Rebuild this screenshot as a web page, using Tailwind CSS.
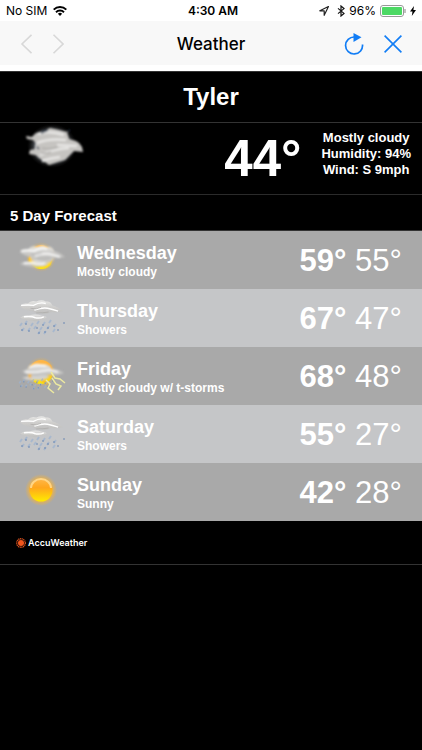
<!DOCTYPE html>
<html lang="en">
<head>
    <meta charset="UTF-8">
    <meta name="viewport" content="width=device-width, initial-scale=1.0">
    <title>Weather</title>
    <script src="https://cdn.jsdelivr.net/npm/@tailwindcss/browser@4"></script>
</head>
<body class="min-h-screen bg-black font-['Liberation_Sans',Arial,sans-serif] text-white">
    <!-- Shared icon artwork -->
    <svg class="absolute h-0 w-0" aria-hidden="true">
        <defs>
            <linearGradient id="cloud-fill" x1="0" y1="0" x2="0" y2="1">
                <stop offset="0" stop-color="#ececea"/>
                <stop offset=".5" stop-color="#cfcecc"/>
                <stop offset="1" stop-color="#bebebc"/>
            </linearGradient>
            <linearGradient id="sun-fill" x1="0" y1="0" x2="0" y2="1">
                <stop offset="0" stop-color="#ffb84a"/>
                <stop offset=".4" stop-color="#ffa61c"/>
                <stop offset="1" stop-color="#ffec00"/>
            </linearGradient>
            <radialGradient id="sun-glow">
                <stop offset=".6" stop-color="#ffb52e" stop-opacity=".9"/>
                <stop offset="1" stop-color="#ffb52e" stop-opacity="0"/>
            </radialGradient>
            <radialGradient id="moon-glow">
                <stop offset=".6" stop-color="#b4bcc6" stop-opacity=".9"/>
                <stop offset=".75" stop-color="#5c6066" stop-opacity=".6"/>
                <stop offset="1" stop-color="#222222" stop-opacity="0"/>
            </radialGradient>
            <filter id="soft" x="-20%" y="-20%" width="140%" height="140%">
                <feGaussianBlur stdDeviation=".8"/>
            </filter>
        </defs>
        <symbol id="clouds" viewBox="0 0 50 40">
            <g filter="url(#soft)">
                <path d="M3 13q3-4 8-3q4-4 9-2q6-3 10 0q5-1 7 4q7 2 11 6q-6 2-12 1q-6 3-12 1q-5 1-8-2q-8 0-13-5z" fill="url(#cloud-fill)" opacity=".9"/>
                <path d="M3 25q4-3 9-2q7-3 14 0q4 0 5 2q-3 3-7 2q-4 3-9 1q-6 0-12-3z" fill="url(#cloud-fill)" opacity=".85"/>
                <path d="M4 12q8-1 13 0q7-4 13-2M18 17q8-3 14-2q5 1 11 3M7 24q8-1 12 1q5 1 9-1" fill="none" stroke="#fff" stroke-width="1.500"/>
                <path d="M14 15q6 2 11-1M20 20q7 0 13-1" fill="none" stroke="#aaa9a8" stroke-width="1" opacity=".7"/>
            </g>
        </symbol>
        <symbol id="rain" viewBox="0 0 50 16">
            <path d="M5 4l-2 3M10 2l-2 3M16 4l-2 3M22 2l-2 3M28 3l-2 3M34 1l-2 3M39 5l-2 3M7 9l-2 3M13 9l-2 3M19 7l-2 3M25 8l-2 3M32 7l-2 3M38 10l-2 3M23 12l-2 3M29 12l-2 3" stroke="#9db3d0" stroke-width="2" opacity=".7"/>
            <path d="M9 4v2M5 10v2M12 11v2M20 8v2M26 5v2M31 8v2M37 6v2M22 13v2M28 12v2M47 3v2M41 10v2" stroke="#6c88b2" stroke-width="1"/>
        </symbol>
        <symbol id="mostly-cloudy" viewBox="0 0 50 50">
            <circle cx="24" cy="22" r="15" fill="url(#sun-glow)" opacity=".6"/>
            <circle cx="24" cy="22" r="12" fill="url(#sun-fill)"/>
            <g filter="url(#soft)">
                <path d="M11 15q12-4 25 0l1 9q-4 6-14 6l-9-4z" fill="#c9c8c5"/>
                <path d="M13 22v4l3 1" fill="none" stroke="#ffcb2b" stroke-width="2.500"/>
                <path d="M22 31q7 2 11-3" fill="none" stroke="#ffdc20" stroke-width="3"/>
            </g>
            <use href="#clouds" y="4" width="50" height="40"/>
        </symbol>
        <symbol id="showers" viewBox="0 0 50 50">
            <use href="#clouds" y="1" width="48" height="38"/>
            <use href="#rain" y="26" width="50" height="16"/>
        </symbol>
        <symbol id="storms" viewBox="0 0 50 50">
            <circle cx="24" cy="21" r="15" fill="url(#sun-glow)" opacity=".6"/>
            <circle cx="24" cy="21" r="12" fill="url(#sun-fill)"/>
            <g filter="url(#soft)">
                <path d="M5 20q5-1 7-4q5-5 12-3q9 0 11 5q8 1 12 4q-7 3-15 2q-5 3-11 1q-8 2-16-5z" fill="url(#cloud-fill)"/>
                <path d="M5 27q8-3 15-2q8-2 13 1q-8 4-14 3q-8 1-14-2z" fill="#d2d2d0"/>
                <path d="M12 16q8-3 17-1M8 21q10 1 18-1q8-2 15 1" fill="none" stroke="#fafafa" stroke-width="1.500"/>
                <path d="M13 23v4M25 29l6 4" stroke="#f6b52b" stroke-width="2.500"/>
            </g>
            <use href="#rain" y="26" width="38" height="14"/>
            <path d="M34 21l4 6l5 1l5 4M29 29l4 4l-2 4l6 5M35 27l4 6l5 2l-3 4" fill="none" stroke="#ece9a0" stroke-width="1.500"/>
        </symbol>
        <symbol id="sunny" viewBox="0 0 50 50">
            <circle cx="24" cy="23" r="16" fill="url(#sun-glow)"/>
            <circle cx="24" cy="23" r="11.500" fill="url(#sun-fill)"/>
            <path d="M14 21a10 9 0 0 1 20 0" fill="none" stroke="#ffdf9a" stroke-width="2" opacity=".8"/>
        </symbol>
    </svg>

    <!-- Status bar -->
    <div class="grid h-[21px] grid-cols-[1fr_auto_1fr] items-center bg-white px-[6px] font-[Inter,sans-serif] text-[12px] leading-none text-black">
        <div class="flex items-center gap-[6px]">
            <span>No SIM</span>
            <svg class="h-[10px] w-[14px]" viewBox="0 0 14 10" fill="none" stroke="#000" stroke-width="2" aria-hidden="true">
                <path d="M.7 3.6a9 9 0 0 1 12.6 0M3 6.2a5.8 5.8 0 0 1 8 0"/>
                <path d="M7 10L4.9 7.8a3 3 0 0 1 4.2 0z" fill="#000" stroke="none"/>
            </svg>
        </div>
        <div class="pl-1 font-semibold">4:30 AM</div>
        <div class="flex items-center justify-end gap-1">
            <svg class="h-[10px] w-[10px]" viewBox="0 0 10 10" fill="none" stroke="#222" aria-hidden="true">
                <path d="M9.500 .5L.8 4.800h4.400V9.300z" stroke-width="1.200" stroke-linejoin="round"/>
            </svg>
            <svg class="ml-1 h-3 w-2" viewBox="0 0 8 12" fill="none" stroke="#111" stroke-width="1.200" aria-hidden="true">
                <path d="M1 3.400l6 5L4 11V1l3 2.600l-6 5"/>
            </svg>
            <span>96%</span>
            <svg class="h-3 w-[26px]" viewBox="0 0 26 12" aria-hidden="true">
                <rect x=".5" y=".5" width="23" height="11" rx="2.500" fill="#fff" stroke="#999"/>
                <rect x="2" y="2" width="20" height="8" rx="1" fill="#4cd964"/>
                <path d="M25 4v4" stroke="#999" stroke-width="1.200"/>
            </svg>
            <svg class="h-[10px] w-[6px]" viewBox="0 0 6 10" aria-hidden="true">
                <path d="M4 0L0 5.600h2.500L1.800 10L6 4H3.400z"/>
            </svg>
        </div>
    </div>

    <!-- Navigation bar -->
    <header class="grid h-[44px] grid-cols-[1fr_auto_1fr] items-center bg-[#f8f8f8] px-5 pt-[2px] text-black">
        <div class="flex gap-5">
            <button type="button" aria-label="Back" disabled>
                <svg class="h-5 w-3" viewBox="0 0 12 20" fill="none" stroke="#d8d8d8" stroke-width="1.600"><path d="M11.500 .8L2 10l9.500 9.200"/></svg>
            </button>
            <button type="button" aria-label="Forward" disabled>
                <svg class="h-5 w-3" viewBox="0 0 12 20" fill="none" stroke="#d8d8d8" stroke-width="1.600"><path d="M1.500 .8L11 10l-9.500 9.200"/></svg>
            </button>
        </div>
        <h1 class="pt-[2px] font-[Inter,sans-serif] text-[17px] font-medium">Weather</h1>
        <div class="flex items-center justify-end gap-5">
            <button type="button" aria-label="Reload">
                <svg class="h-[22px] w-[20px]" viewBox="0 0 20 22" fill="none" stroke="#117df5" stroke-width="1.700">
                    <path d="M10.500 4A8.500 8.500 0 1 0 18.500 11.500"/>
                    <path d="M9.500 0v9L17.500 4.200z" fill="#117df5" stroke="none"/>
                </svg>
            </button>
            <button type="button" aria-label="Close">
                <svg class="h-[18px] w-[18px]" viewBox="0 0 18 18" stroke="#117df5" stroke-width="1.600"><path d="M.6 .6l16.800 16.800M17.400 .6L.6 17.400"/></svg>
            </button>
        </div>
    </header>
    <div class="h-[6px] bg-white"></div>

    <main>
        <h2 class="flex h-[52px] items-center justify-center border-y border-[#333] text-[24px] leading-none font-bold">Tyler</h2>

        <!-- Current conditions -->
        <section class="flex h-[72px] items-start border-b border-[#2b2b2b] pl-5">
            <svg class="h-[48px] w-[66px]" viewBox="0 0 66 48" role="img" aria-label="Mostly cloudy">
                <ellipse cx="32" cy="23" rx="25" ry="22" fill="url(#moon-glow)"/>
                <g filter="url(#soft)">
                    <path d="M6 13l6 1l4-4l7-1l7-4l9 2l8 2l2 7l7 2l3 2l3 4l1 5l-9-1l-4 4l-5 5l-7 2l-9 3l-5-4l-5-3l-3-3l-7-1l1-4l5-1l1-6l-3-3l-6-1z" fill="#c6c4c1"/>
                    <path d="M18 11q10-4 26 1M17 20q12-5 29-3M37 22l20 1M20 32q13-6 29-7M22 38q9-3 18-4" fill="none" stroke="#e6e5e3" stroke-width="2.500"/>
                    <path d="M22 25q8 2 16-1M21 30q5 1 10-1" fill="none" stroke="#b0aeab" stroke-width="1.500"/>
                    <path d="M21 10l7-3M17 24l2 2M47 9l3-2" stroke="#26364a" stroke-width="1.500"/>
                </g>
            </svg>
            <div class="ml-auto pt-[10px] text-[51px] leading-[52px] font-bold">44°</div>
            <div class="mr-[11px] ml-5 pt-[7px] text-center text-[13px] leading-[16px] font-bold">
                <p>Mostly cloudy</p>
                <p>Humidity: 94%</p>
                <p>Wind: S 9mph</p>
            </div>
        </section>

        <!-- Forecast -->
        <h3 class="flex h-[36px] items-center border-b border-[#333] px-[10px] pt-[8px] text-[15px] font-bold">5 Day Forecast</h3>
        <ul>
            <li class="flex h-[58px] items-center bg-[#a9a9a9] pr-5 pl-[17px]">
                <svg class="h-[50px] w-[50px] shrink-0" role="img" aria-label="Mostly cloudy"><use href="#mostly-cloudy"/></svg>
                <div class="ml-[10px] flex-1 pt-[2px] font-bold">
                    <p class="text-[18px] leading-[22px]">Wednesday</p>
                    <p class="text-[12px] leading-[16px]">Mostly cloudy</p>
                </div>
                <p class="text-[31px] leading-none"><b>59°</b> 55°</p>
            </li>
            <li class="flex h-[58px] items-center bg-[#c5c6c8] pr-5 pl-[17px]">
                <svg class="h-[50px] w-[50px] shrink-0" role="img" aria-label="Showers"><use href="#showers"/></svg>
                <div class="ml-[10px] flex-1 pt-[2px] font-bold">
                    <p class="text-[18px] leading-[22px]">Thursday</p>
                    <p class="text-[12px] leading-[16px]">Showers</p>
                </div>
                <p class="text-[31px] leading-none"><b>67°</b> 47°</p>
            </li>
            <li class="flex h-[58px] items-center bg-[#a9a9a9] pr-5 pl-[17px]">
                <svg class="h-[50px] w-[50px] shrink-0" role="img" aria-label="Thunderstorms"><use href="#storms"/></svg>
                <div class="ml-[10px] flex-1 pt-[2px] font-bold">
                    <p class="text-[18px] leading-[22px]">Friday</p>
                    <p class="text-[12px] leading-[16px]">Mostly cloudy w/ t-storms</p>
                </div>
                <p class="text-[31px] leading-none"><b>68°</b> 48°</p>
            </li>
            <li class="flex h-[58px] items-center bg-[#c5c6c8] pr-5 pl-[17px]">
                <svg class="h-[50px] w-[50px] shrink-0" role="img" aria-label="Showers"><use href="#showers"/></svg>
                <div class="ml-[10px] flex-1 pt-[2px] font-bold">
                    <p class="text-[18px] leading-[22px]">Saturday</p>
                    <p class="text-[12px] leading-[16px]">Showers</p>
                </div>
                <p class="text-[31px] leading-none"><b>55°</b> 27°</p>
            </li>
            <li class="flex h-[58px] items-center bg-[#a9a9a9] pr-5 pl-[17px]">
                <svg class="h-[50px] w-[50px] shrink-0" role="img" aria-label="Sunny"><use href="#sunny"/></svg>
                <div class="ml-[10px] flex-1 pt-[2px] font-bold">
                    <p class="text-[18px] leading-[22px]">Sunday</p>
                    <p class="text-[12px] leading-[16px]">Sunny</p>
                </div>
                <p class="text-[31px] leading-none"><b>42°</b> 28°</p>
            </li>
        </ul>
    </main>

    <footer class="flex h-[44px] items-center border-b border-[#333] px-4">
        <a href="#" class="flex items-center gap-[2px] font-[Inter,sans-serif] text-[9px] leading-none font-semibold">
            <svg class="h-[10px] w-[10px]" viewBox="0 0 10 10" aria-hidden="true">
                <circle cx="5" cy="5" r="4.300" fill="none" stroke="#d9501e" stroke-width="1.400" stroke-dasharray="1.100 .6"/>
                <circle cx="5" cy="5" r="3" fill="#f0561d"/>
            </svg>
            AccuWeather
        </a>
    </footer>
</body>
</html>
